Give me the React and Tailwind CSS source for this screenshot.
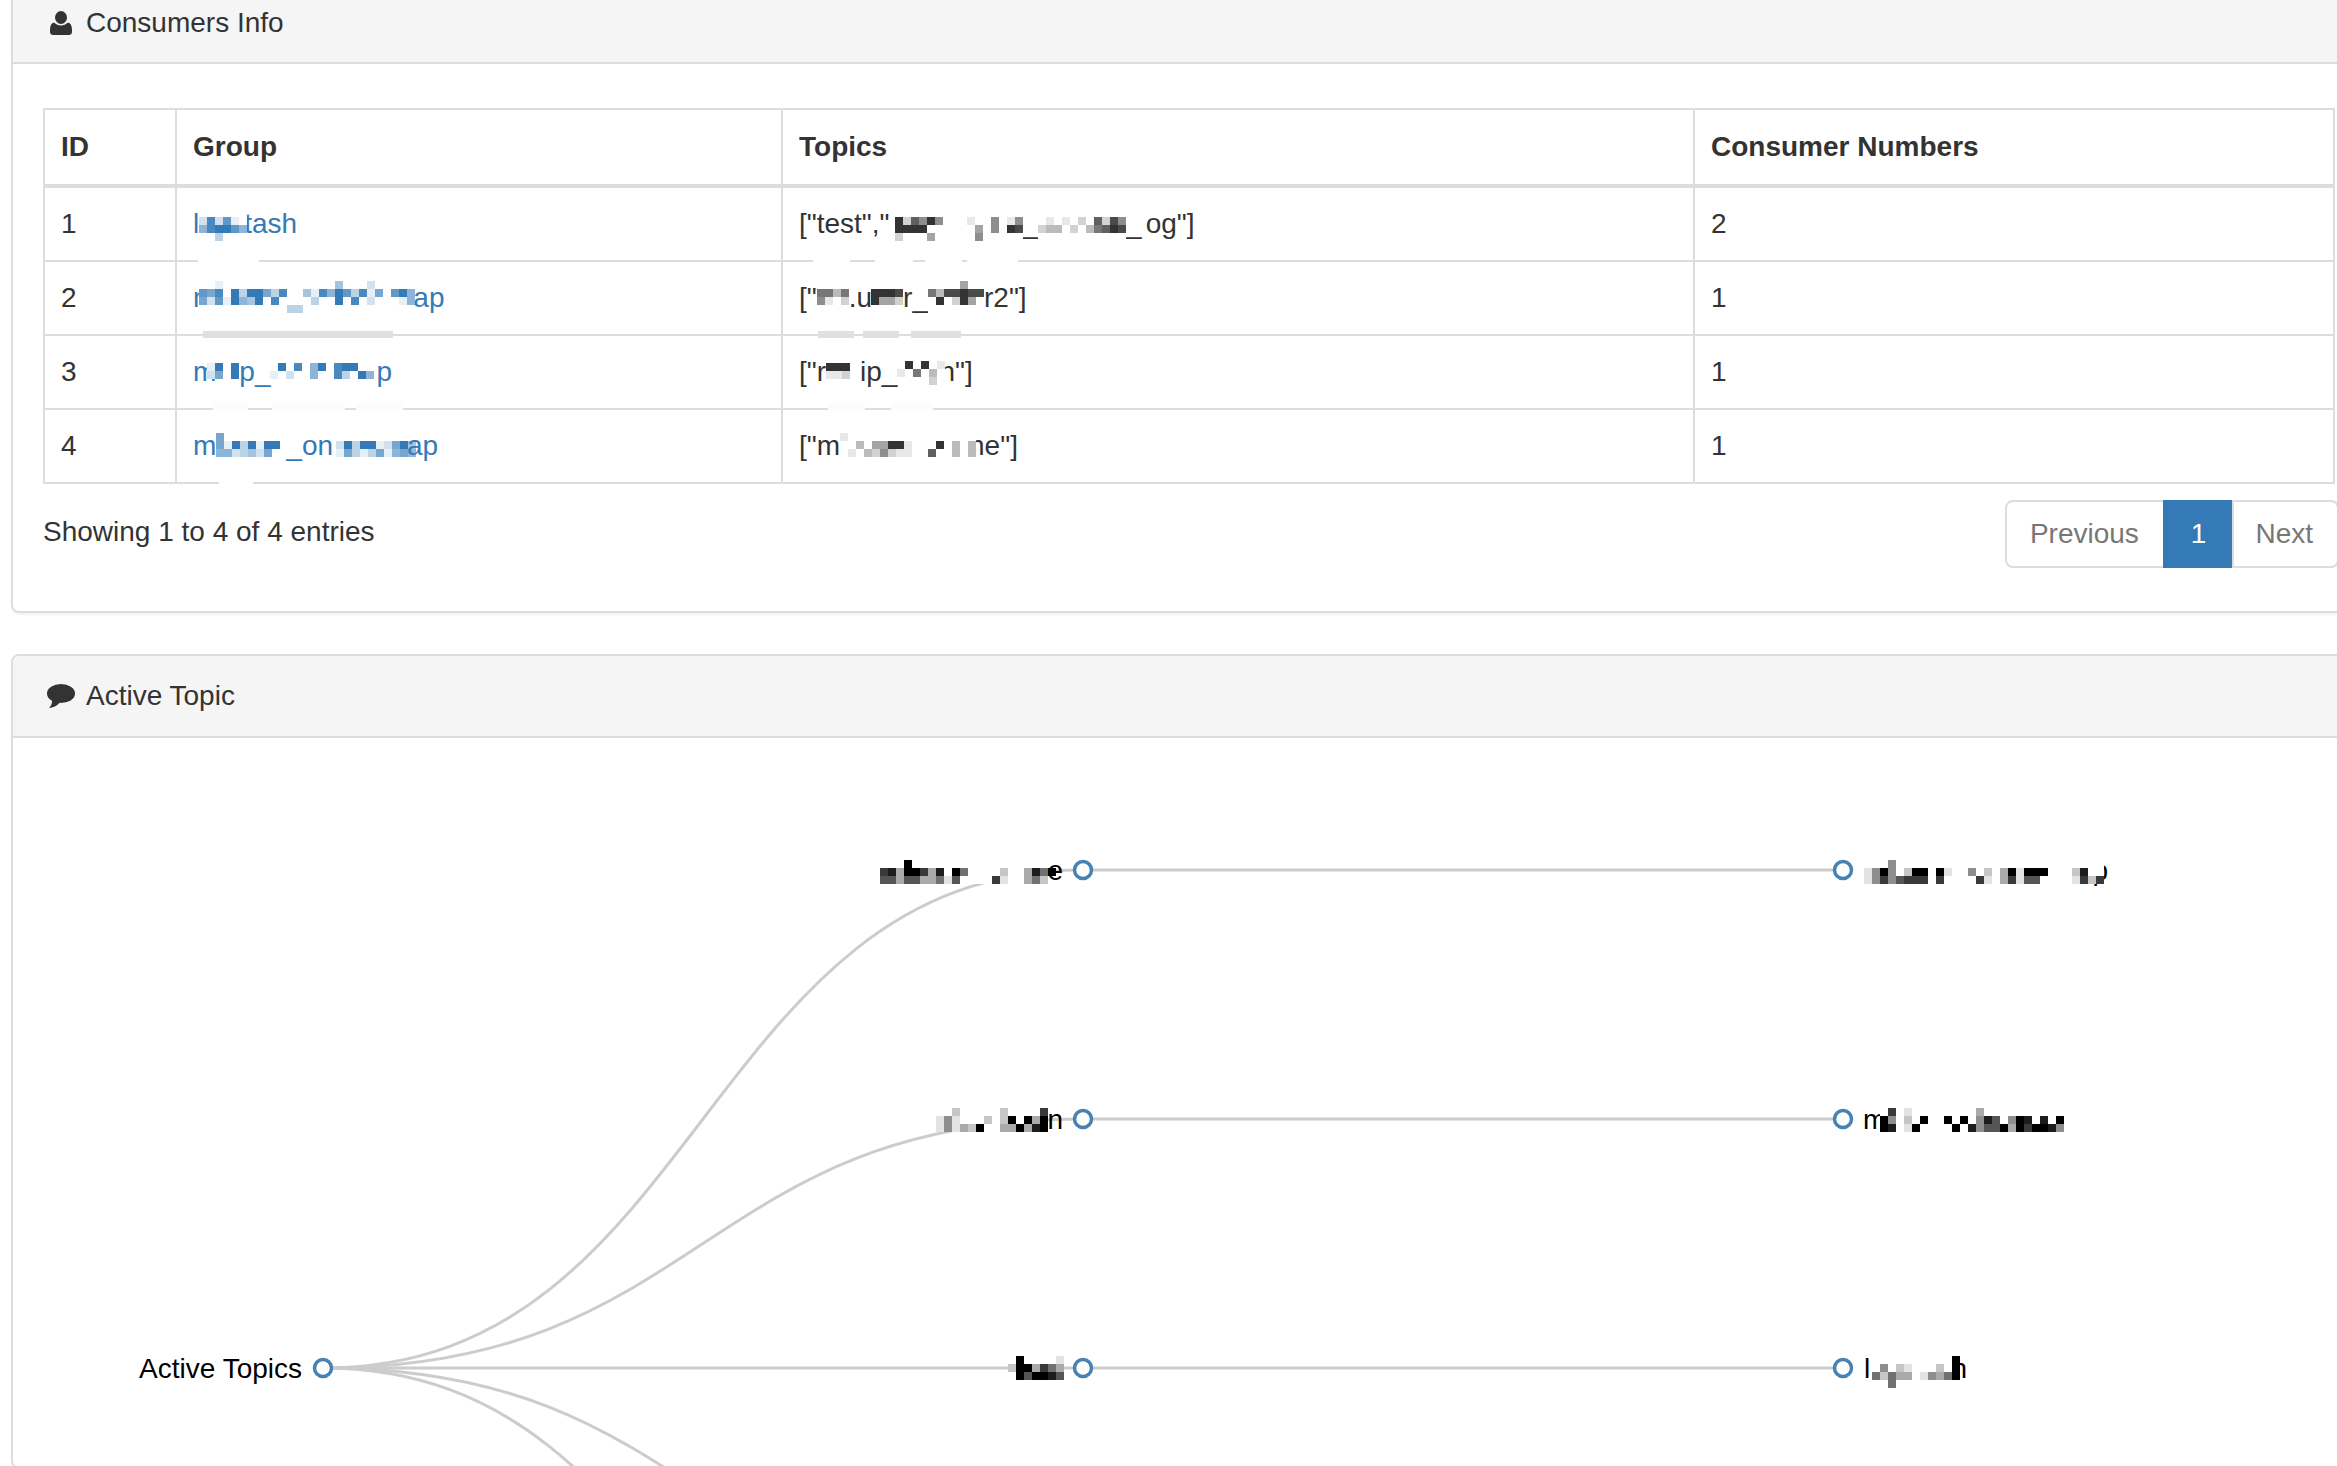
import React from "react";

const BLUE = [51, 122, 183];
const GRAY = [51, 51, 51];
const BLACK = [0, 0, 0];

// 0 is white, 9 is full ink, "." leaves the cell see-through
const cellFill = (ink, ch) => {
  const t = Number(ch) / 9;
  const [r, g, b] = ink.map((c) => Math.round(255 + (c - 255) * t));
  return `rgb(${r},${g},${b})`;
};

function Cells({ x = 0, y = 0, rows, ink }) {
  return (
    <g shapeRendering="crispEdges">
      {rows.map((row, r) =>
        row.split("").map((ch, c) =>
          ch === "." ? null : (
            <rect
              key={`${r}-${c}`}
              x={x + c * 8}
              y={y + r * 8}
              width="8"
              height="8"
              fill={cellFill(ink, ch)}
            />
          )
        )
      )}
    </g>
  );
}

// blurred-out part of a name, sits inline with the visible letters
function Mosaic({ rows, ink, className }) {
  const cols = Math.max(...rows.map((r) => r.length));
  return (
    <svg
      width={cols * 8}
      height={rows.length * 8}
      className={`inline-block relative z-10 ${className}`}
    >
      <Cells rows={rows} ink={ink} />
    </svg>
  );
}

function UserIcon() {
  return (
    <svg width="22" height="24" viewBox="0 0 22 24" fill="#333">
      <ellipse cx="11" cy="6.5" rx="6" ry="6.5" />
      <path d="M4 11.5C6 13.5 8.5 14.5 11 14.5C13.5 14.5 16 13.5 18 11.5C20.5 12 22 14.5 22 19V21C22 23 20.5 24 19 24H3C1.5 24 0 23 0 21V19C0 14.5 1.5 12 4 11.5Z" />
    </svg>
  );
}

function CommentIcon() {
  return (
    <svg width="28" height="24" viewBox="0 0 28 24" fill="#333">
      <ellipse cx="14" cy="9.5" rx="14" ry="9.5" />
      <path d="M5 15C5.5 18.5 4.5 21.5 2 24C6 24 10 21.5 13 18.5Z" />
    </svg>
  );
}

function PanelHeading({ icon, title, height }) {
  return (
    <div className={`${height} px-[30px] flex items-center bg-[#f5f5f5] border-b-2 border-[#ddd] rounded-t-[6px]`}>
      <span className="w-[36px] flex justify-center mr-[7px]">{icon}</span>
      <span>{title}</span>
    </div>
  );
}

const thClass =
  "border-2 border-b-4 border-[#ddd] px-[16px] h-[77px] text-left font-bold";
const tdClass = "border-2 border-[#ddd] px-[16px] h-[74px] whitespace-nowrap";
const firstTdClass = "border-2 border-[#ddd] px-[16px] h-[75px] whitespace-nowrap";
const linkClass = "text-[#337ab7]";

function ConsumersTable() {
  return (
    <div className="relative">
      <table className="w-[2292px] table-fixed border-collapse">
        <thead>
          <tr>
            <th className={`${thClass} w-[132px]`}>ID</th>
            <th className={`${thClass} w-[606px]`}>Group</th>
            <th className={`${thClass} w-[912px]`}>Topics</th>
            <th className={thClass}>Consumer Numbers</th>
          </tr>
        </thead>
        <tbody>
          <tr>
            <td className={firstTdClass}>1</td>
            <td className={firstTdClass}>
              <a className={linkClass}>
                l
                <Mosaic ink={BLUE} className="align-[-8px]" rows={["282710", "589975", "003000"]} />
                <span className="-ml-[3px]">tash</span>
              </a>
            </td>
            <td className={firstTdClass}>
              {'["test","'}
              <Mosaic
                ink={GRAY}
                className="align-[-8px] ml-[5px]"
                rows={["9275950001005015", "9999000000405098", "2000400000500000"]}
              />
              _
              <Mosaic ink={GRAY} className="align-[-8px]" rows={["01010207285", "23302036798", "00000000000"]} />
              <span>_</span>
              <span className="ml-[4px]">{'og"]'}</span>
            </td>
            <td className={firstTdClass}>2</td>
          </tr>
          <tr>
            <td className={tdClass}>2</td>
            <td className={tdClass}>
              <a className={linkClass}>
                m
                <Mosaic
                  ink={BLUE}
                  className="align-[-6px] -ml-[17px]"
                  rows={[
                    "001000000000000004000200000",
                    "768093996380041859738160795",
                    "627195490800003009080200015",
                    "000000000003300000000000000",
                  ]}
                />
                <span className="-ml-[2px]">ap</span>
              </a>
            </td>
            <td className={tdClass}>
              {'["'}
              <Mosaic ink={GRAY} className="align-[-6px]" rows={["0000", "6636", "5102", "0000"]} />
              .u
              <Mosaic ink={GRAY} className="align-[-6px] -ml-[1px]" rows={["0000", "9998", "9442", "0000"]} />
              r_
              <Mosaic ink={GRAY} className="align-[-6px]" rows={["0000400", "6388988", "0902940", "0000000"]} />
              {'r2"]'}
            </td>
            <td className={tdClass}>1</td>
          </tr>
          <tr>
            <td className={tdClass}>3</td>
            <td className={tdClass}>
              <a className={linkClass}>
                m
                <Mosaic ink={BLUE} className="align-[2px] -ml-[9px]" rows={["1909", "2609"]} />
                p_
                <Mosaic ink={BLUE} className="align-[2px]" rows={["0908059089900", "1020050083095"]} />
                <span className="ml-[2px]">p</span>
              </a>
            </td>
            <td className={tdClass}>
              {'["r'}
              <Mosaic ink={GRAY} className="align-[2px]" rows={["999", "112"]} />
              <span className="ml-[10px]">ip_</span>
              <Mosaic ink={GRAY} className="align-[-4px]" rows={["090901", "106030", "000020"]} />
              <span className="-ml-[6px]">{'h"]'}</span>
            </td>
            <td className={tdClass}>1</td>
          </tr>
          <tr>
            <td className={tdClass}>4</td>
            <td className={tdClass}>
              <a className={linkClass}>
                m
                <Mosaic ink={BLUE} className="align-[-2px]" rows={["60000000", "61939199", "55234260"]} />
                <span className="ml-[6px]">_on</span>
                <Mosaic ink={BLUE} className="align-[-2px] ml-[3px]" rows={["0000000000", "2939912694", "1631361565"]} />
                <span className="relative z-20 -ml-[9px]">ap</span>
              </a>
            </td>
            <td className={tdClass}>
              {'["m'}
              <Mosaic
                ink={GRAY}
                className="align-[-2px]"
                rows={["10000000000000000", "00304499100090303", "01032521100700303"]}
              />
              <span className="-ml-[7px]">{'ne"]'}</span>
            </td>
            <td className={tdClass}>1</td>
          </tr>
        </tbody>
      </table>

      {/* smudges the blur left on the row lines */}
      <svg
        className="absolute left-0 top-0 pointer-events-none z-20"
        width="2291"
        height="380"
        viewBox="43 108 2291 380"
      >
        {[198, 813, 875, 925, 967].map((x, i) => (
          <rect key={x} x={x} y="258" width={[61, 37, 38, 37, 51][i]} height="6" fill="#fff" />
        ))}
        {[203, 818, 863, 911].map((x, i) => (
          <rect key={x} x={x} y="331" width={[190, 36, 36, 50][i]} height="7" fill="#e0e0e0" />
        ))}
        {[213, 272, 356, 828, 891].map((x, i) => (
          <rect key={x} x={x} y="403" width={[35, 73, 47, 37, 42][i]} height="8" fill="#fcfcfc" />
        ))}
        <rect x="219" y="481" width="34" height="5" fill="#fff" />
      </svg>
    </div>
  );
}

function Pagination() {
  return (
    <ul className="flex -mr-[5px] text-[#777]">
      <li className="h-[68px] pl-[23px] pr-[24px] flex items-center border-2 border-[#ddd] rounded-l-[8px]">
        Previous
      </li>
      <li className="h-[68px] px-[26px] flex items-center -ml-[2px] border-2 border-[#337ab7] bg-[#337ab7] text-white">
        1
      </li>
      <li className="h-[68px] pl-[21px] pr-[24px] flex items-center -ml-[2px] border-2 border-[#ddd] rounded-r-[8px]">
        Next
      </li>
    </ul>
  );
}

const ROOT = { x: 323, y: 1368 };
const MIDDLE_X = 1083;
const LEAF_X = 1843;
const ROWS = [870, 1119, 1368, 1617, 1866];

const diagonal = (y) => {
  const mx = (ROOT.x + MIDDLE_X) / 2;
  return `M${ROOT.x} ${ROOT.y}C${mx} ${ROOT.y} ${mx} ${y} ${MIDDLE_X} ${y}`;
};

function TopicTree() {
  const labelClass = "text-[28px] fill-black";
  return (
    <svg className="block" width="2338" height="729" viewBox="13 738 2338 729">
      <g fill="none" stroke="#ccc" strokeWidth="3">
        {ROWS.map((y) => (
          <path key={y} d={diagonal(y)} />
        ))}
        {ROWS.map((y) => (
          <path key={y} d={`M${MIDDLE_X} ${y}H${LEAF_X}`} />
        ))}
      </g>

      {/* labels sit over the links and hide them */}
      <rect x="880" y="860" width="176" height="24" fill="#fff" />
      <rect x="936" y="1108" width="112" height="24" fill="#fff" />

      <text x="302" y="1378" textAnchor="end" className={labelClass}>
        Active Topics
      </text>

      <text x="1063" y="880" textAnchor="end" className={labelClass}>
        e
      </text>
      <Cells
        x={880}
        y={860}
        ink={BLACK}
        rows={[
          "000900000000000000000.",
          "7839973809500002003859",
          "663663351600007100352.",
        ]}
      />

      <text x="1063" y="1129" textAnchor="end" className={labelClass}>
        n
      </text>
      <Cells
        x={936}
        y={1108}
        ink={BLACK}
        rows={["00200000200007", "14100020290939", "14132900339389"]}
      />

      <Cells x={1008} y={1356} ink={BLACK} rows={[".9....1", "2993753", ".969986"]} />

      <text x="2108" y="880" textAnchor="end" className={labelClass}>
        p
      </text>
      <Cells
        x={1864}
        y={860}
        ink={BLACK}
        rows={[
          "000400000000000000000000000000",
          "149402990910040203919990002800",
          "147467770700007103716600001727",
        ]}
      />

      <text x="1863" y="1129" className={labelClass}>
        m
      </text>
      <Cells
        x={1880}
        y={1108}
        ink={BLACK}
        rows={["0701000000003", "94020900909048604980809", "98019000090846693979984"]}
      />

      <text x="1864" y="1378" className={labelClass}>
        l
      </text>
      <text x="1967" y="1378" textAnchor="end" className={labelClass}>
        h
      </text>
      <Cells
        x={1872}
        y={1356}
        ink={BLACK}
        rows={["..........9", "04021000209", "52533014359", "..5........"]}
      />

      <g fill="#fff" stroke="#4682b4" strokeWidth="3.5">
        <circle cx={ROOT.x} cy={ROOT.y} r="8.5" />
        {ROWS.map((y) => (
          <circle key={y} cx={MIDDLE_X} cy={y} r="8.5" />
        ))}
        {ROWS.map((y) => (
          <circle key={y} cx={LEAF_X} cy={y} r="8.5" />
        ))}
      </g>
    </svg>
  );
}

export default function App() {
  return (
    <div className="w-[2337px] h-[1466px] overflow-hidden bg-white text-[28px] leading-[40px] text-[#333] font-['Liberation_Sans',sans-serif]">
      <div className="-mt-[19px] ml-[11px] w-[2355px]">
        <section className="border-2 border-[#ddd] rounded-[8px] shadow-[0_2px_2px_rgba(0,0,0,0.05)]">
          <PanelHeading height="h-[81px]" icon={<UserIcon />} title="Consumers Info" />
          <div className="pt-[44px] pb-[43px] px-[30px]">
            <ConsumersTable />
            <div className="flex justify-between w-[2291px] mt-[16px]">
              <div className="pt-[12px]">Showing 1 to 4 of 4 entries</div>
              <Pagination />
            </div>
          </div>
        </section>

        <section className="mt-[41px] border-2 border-[#ddd] rounded-[8px]">
          <PanelHeading height="h-[82px]" icon={<CommentIcon />} title="Active Topic" />
          <TopicTree />
        </section>
      </div>
    </div>
  );
}
